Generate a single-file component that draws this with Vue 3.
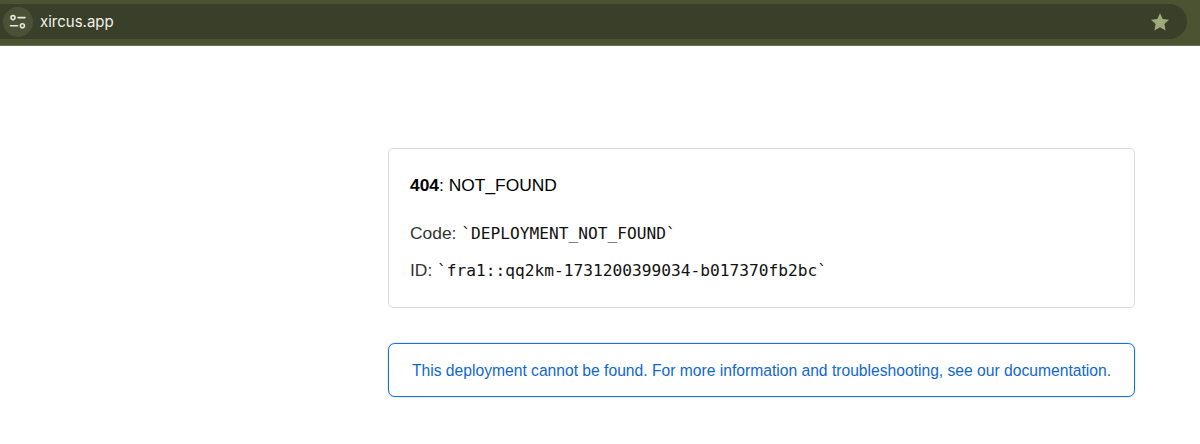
<script setup>
const code = "`DEPLOYMENT_NOT_FOUND`";
const id = "`fra1::qq2km-1731200399034-b017370fb2bc`";
</script>

<template>
  <div class="page">
    <header class="toolbar">
      <div class="omnibox">
        <span class="site-btn">
          <svg width="18" height="16" viewBox="0 0 18 16" fill="none" stroke="#e6e8da" stroke-width="1.6" stroke-linecap="round">
            <circle cx="4" cy="3.6" r="2" />
            <path d="M9 3.6h7" />
            <path d="M1.5 11.8h7" />
            <circle cx="13.4" cy="11.8" r="2" />
          </svg>
        </span>
        <span class="url">xircus.app</span>
        <svg class="star" width="20" height="20" viewBox="0 0 20 20">
          <path d="M10 1.2l2.7 5.8 6.3.8-4.6 4.3 1.2 6.3L10 15.3l-5.6 3.1 1.2-6.3L1 7.8l6.3-.8z" fill="#9dab7b" />
        </svg>
      </div>
    </header>

    <main class="content">
      <section class="card">
        <h1 class="title"><strong>404</strong>: NOT_FOUND</h1>
        <p class="line">Code: <code>{{ code }}</code></p>
        <p class="line">ID: <code>{{ id }}</code></p>
      </section>
      <section class="notice">
        This deployment cannot be found. For more information and troubleshooting, see our documentation.
      </section>
    </main>
  </div>
</template>

<style>
html,
body {
  margin: 0;
  background: #fff;
}
</style>

<style scoped>
.page {
  height: 444px;
  overflow: hidden;
  font-family: "Liberation Sans", Arial, sans-serif;
}

.toolbar {
  height: 46px;
  box-sizing: border-box;
  padding-top: 4px;
  background: #4c5333;
  border-bottom: 1px solid #6a7052;
}

.omnibox {
  height: 35px;
  width: 1187px;
  box-sizing: border-box;
  display: flex;
  align-items: center;
  background: #3a3f2a;
  border-radius: 0 18px 18px 0;
  padding-right: 17px;
}

.site-btn {
  width: 30px;
  height: 30px;
  margin-left: 3px;
  border-radius: 50%;
  background: #4b5137;
  display: flex;
  align-items: center;
  justify-content: center;
}

.url {
  margin-left: 7px;
  font-family: Inter, "Liberation Sans", sans-serif;
  font-size: 15px;
  color: #f1f2ea;
}

.star {
  margin-left: auto;
}

.content {
  width: 747px;
  margin: 102px 0 0 388px;
  display: flex;
  flex-direction: column;
  gap: 35px;
}

.card {
  height: 160px;
  box-sizing: border-box;
  padding: 26px 21px 0;
  border: 1px solid #d9d9d9;
  border-radius: 5px;
}

.title {
  margin: 0 0 28px;
  font-size: 17.4px;
  line-height: 20px;
  font-weight: 400;
  color: #000;
}

.line {
  margin: 0 0 16px;
  font-size: 17.4px;
  line-height: 21px;
  color: #333;
}

code {
  font-family: "DejaVu Sans Mono", monospace;
  font-size: 16.2px;
  color: #111;
}

.notice {
  height: 54px;
  box-sizing: border-box;
  padding-top: 2px;
  display: flex;
  align-items: center;
  justify-content: center;
  border: 1px solid #1a70d6;
  box-shadow: 0 0 1px #1a70d6;
  border-radius: 7px;
  font-size: 15.65px;
  color: #0f67d0;
}
</style>
